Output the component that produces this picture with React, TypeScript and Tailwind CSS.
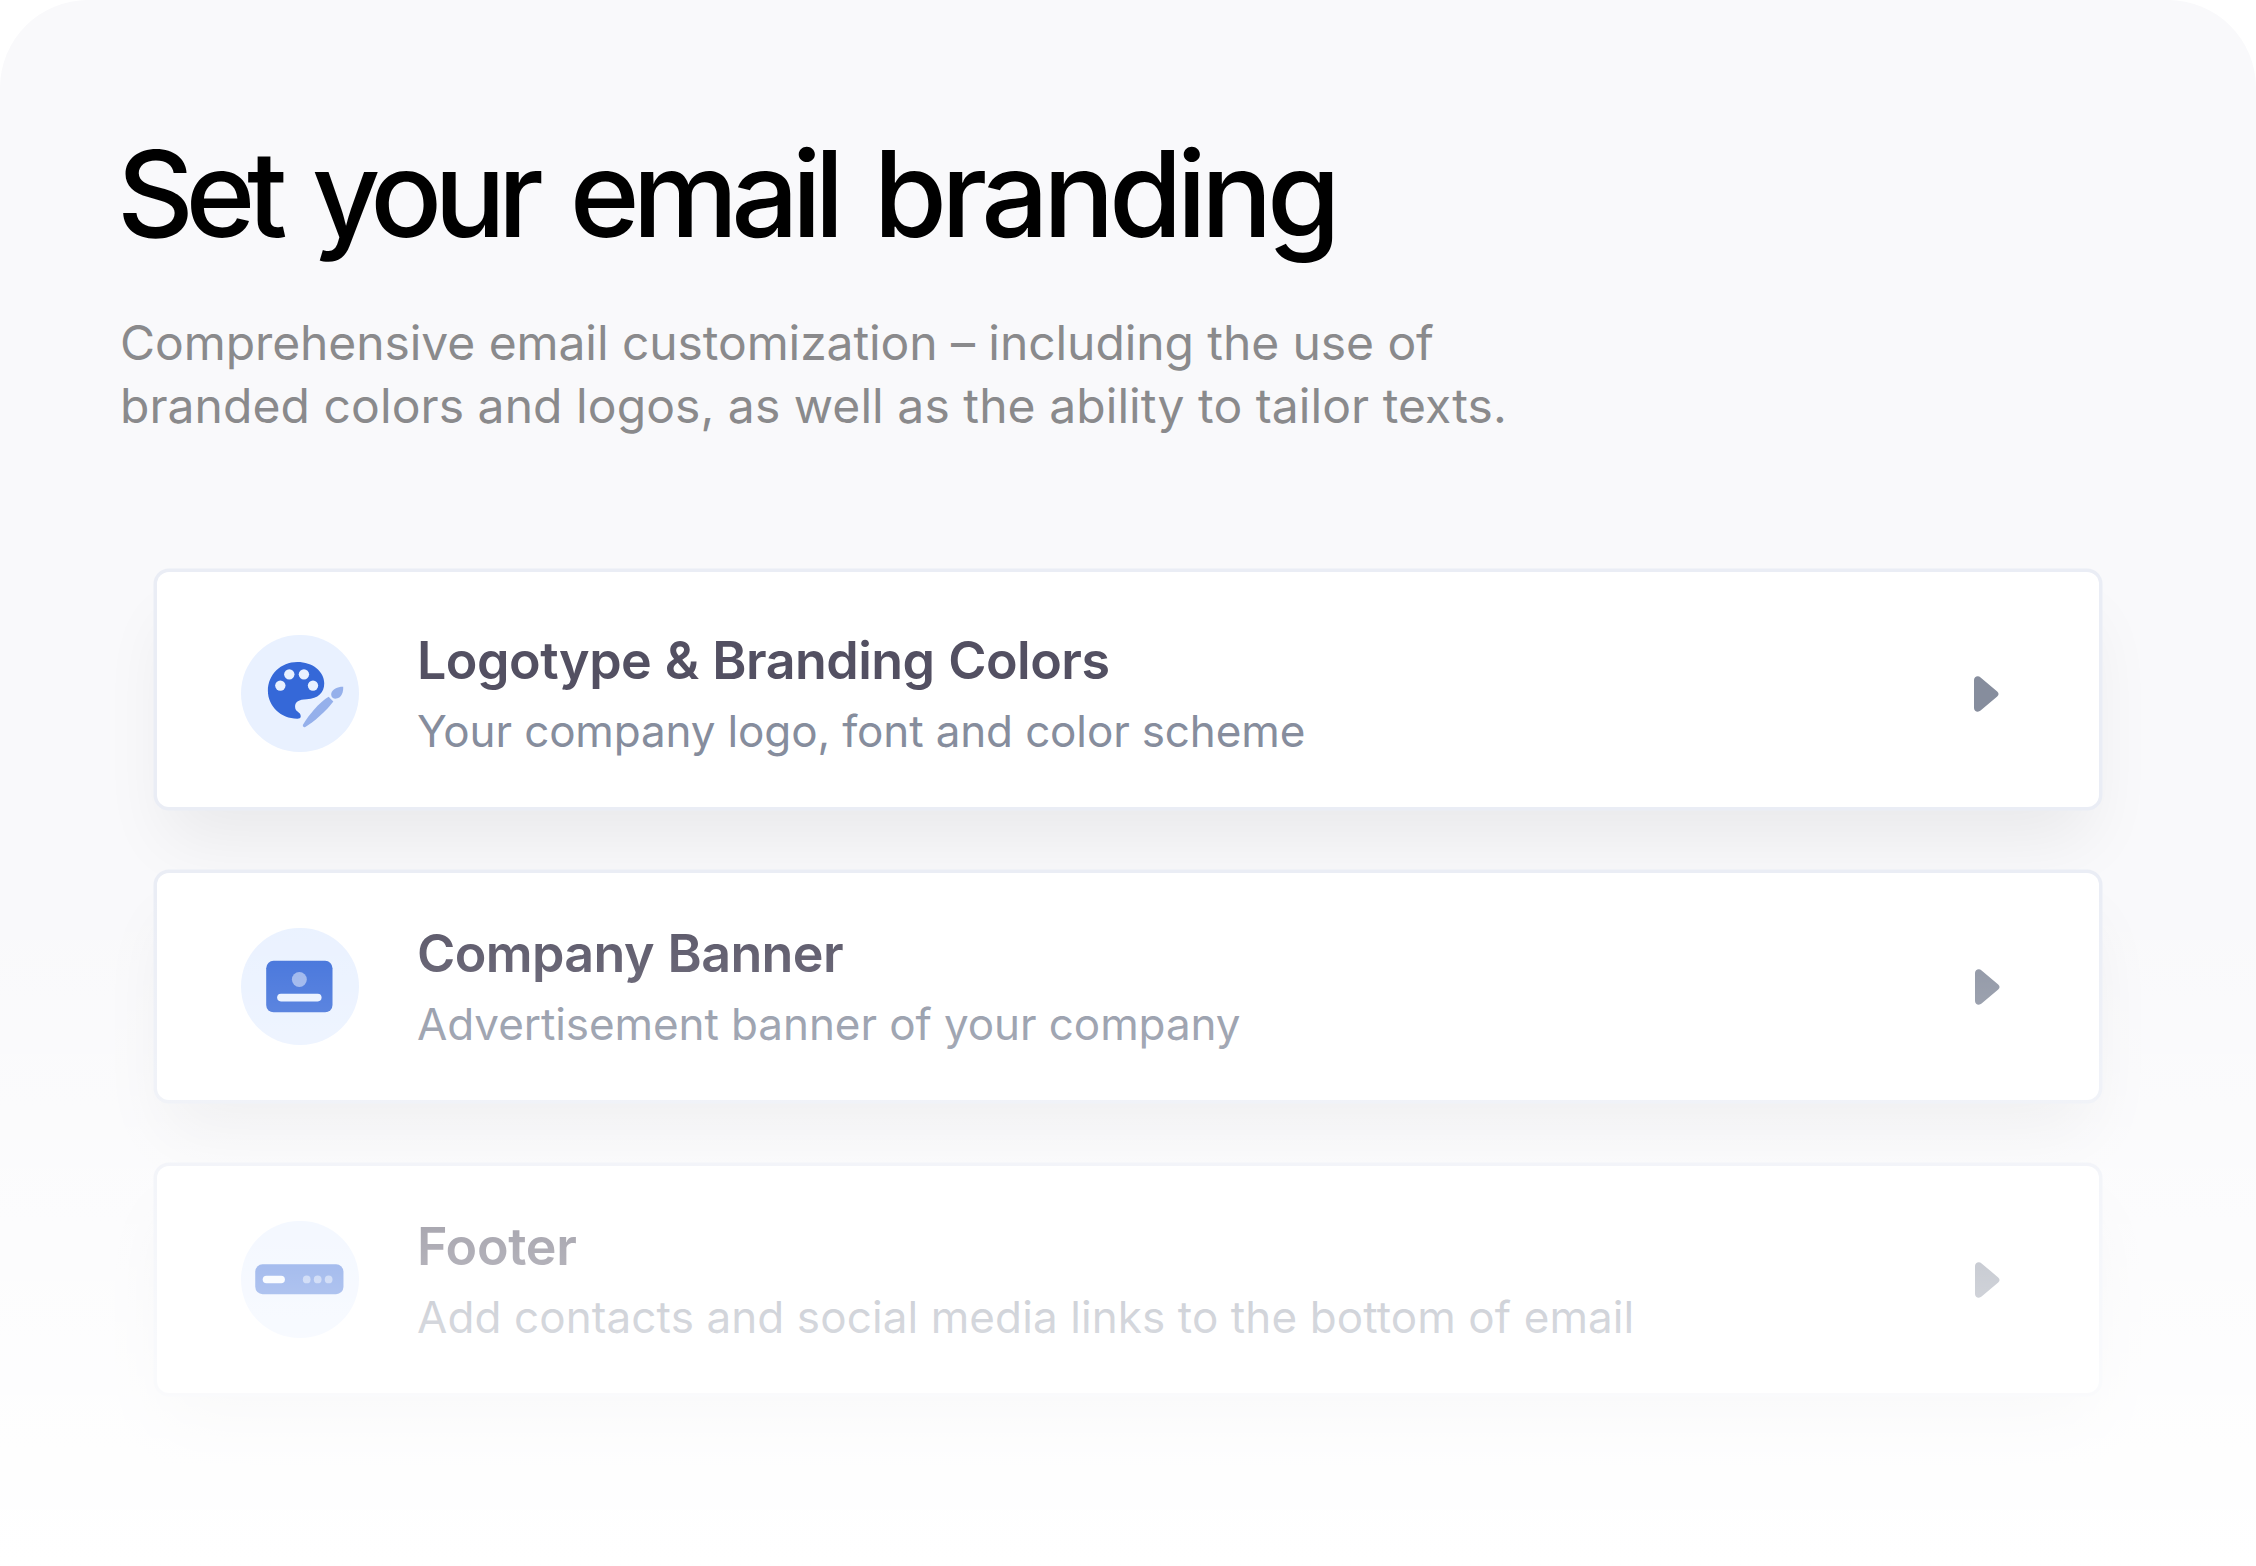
import type { ReactNode } from "react";

function PaletteIcon() {
  return (
    <svg className="size-full" viewBox="241 635 118 118" fill="none">
      <path
        fill="#3568D8"
        d="M297.5 662C313 662 324.600 671.5 324.600 683.5C324.600 693 318.5 699 307 699.4C299 699.5 295.3 702 295.3 707C295.3 712.5 301 712 301 716.5C301 718.3 299.5 719 297.5 719C281 719 268 706.5 268 691C268 674.5 281 662 297.5 662Z"
      />
      <g fill="#E9F1FF">
        <circle cx="280.5" cy="685.8" r="5.2" />
        <circle cx="289.5" cy="674.5" r="5.2" />
        <circle cx="304.2" cy="674.5" r="5.2" />
        <circle cx="313.3" cy="685.8" r="5.2" />
      </g>
      <g fill="#95B0EB">
        <path d="M343.6 687C344 691 342.5 699 335.5 699C333 699 331.3 696.5 331.6 694C332.3 689 339 686.8 343.6 687Z" />
        <path d="M329 697L333.7 701.8C327 711 314 722.5 305.6 727.3C303.8 728.2 302.4 726.8 303.4 725C309 715 320 702.5 329 697Z" />
      </g>
    </svg>
  );
}

function BannerIcon() {
  return (
    <svg className="size-full" viewBox="241 928 118 118" fill="none">
      <rect x="266.3" y="961" width="66.6" height="51.7" rx="7.4" fill="#3568D8" />
      <circle cx="299.6" cy="979.7" r="7.5" fill="#95B0EB" />
      <rect x="277.3" y="994" width="44.6" height="7.7" rx="3.8" fill="#E9F1FF" />
    </svg>
  );
}

function FooterIcon() {
  return (
    <svg className="size-full" viewBox="241 1221.5 118 118" fill="none">
      <rect x="255.3" y="1265" width="88.6" height="30" rx="7.4" fill="#3568D8" />
      <rect x="262.8" y="1276.4" width="22.3" height="7.6" rx="3.8" fill="#F4F8FF" />
      <g fill="#95B0EB">
        <circle cx="307" cy="1280.2" r="3.9" />
        <circle cx="318" cy="1280.2" r="3.9" />
        <circle cx="329" cy="1280.2" r="3.9" />
      </g>
    </svg>
  );
}

function Caret() {
  return (
    <svg className="h-[36px] w-[25px]" viewBox="0 0 25 36">
      <path
        fill="#868D9D"
        d="M0 4C0 .6 4 -.9 6.6 1.4L23.2 15.4C25 17 25 19 23.2 20.6L6.6 34.6C4 36.900 0 35.400 0 32Z"
      />
    </svg>
  );
}

function Row({
  icon,
  title,
  text,
  titleClass,
  textClass,
  first = false,
}: {
  icon: ReactNode;
  title: string;
  text: string;
  titleClass: string;
  textClass: string;
  first?: boolean;
}) {
  return (
    <div
      className={`flex w-full items-center rounded-[12px] bg-white pl-[84px] shadow-[0_0_0_3.5px_#eaedf5,0_42px_68px_-10px_rgba(0,0,0,0.066)] ${
        first ? "h-[235px] pt-[8px] pr-[100px]" : "h-[227px] pr-[99px]"
      }`}
    >
      <div className="flex size-[117.5px] shrink-0 rounded-full bg-[#E9F1FF]">{icon}</div>
      <div className="ml-[58.5px] flex-1 pt-[5px] whitespace-nowrap">
        <h2 className={`text-[52px] leading-[70px] font-semibold text-[#535062] ${titleClass}`}>
          {title}
        </h2>
        <p className={`text-[44px] leading-[70px] text-[#868D9D] ${textClass}`}>{text}</p>
      </div>
      <Caret />
    </div>
  );
}

export default function App() {
  return (
    <main className="relative h-[1566px] w-[2256px] overflow-hidden rounded-t-[88px] bg-[#F9F9FB] font-['Inter',sans-serif]">
      <header className="h-[572px] pt-[119px] pl-[120px] whitespace-nowrap">
        <h1 className="-ml-[3px] w-fit text-[119px] leading-[150px] font-[470] tracking-[-5.7px] text-black">
          <span className="tracking-[-8.4px]">Set</span>{" "}
          <span className="ml-[7px] tracking-[-8px]">your</span>{" "}
          <span className="ml-[8px] tracking-[-7.1px]">email</span>{" "}
          <span className="ml-[10px]">branding</span>
        </h1>
        <p className="mt-[42px] w-fit text-[48px] leading-[63px] text-[#8A8A8C]">
          <span className="tracking-[-0.08px]">
            Comprehensive email customization – including the use of
          </span>
          <br />
          <span className="tracking-[0.07px]">
            branded colors and logos, as well as the ability to tailor texts.
          </span>
        </p>
      </header>
      <section className="flex flex-col gap-[66px] pr-[157px] pl-[157px]">
        <Row
          first
          icon={<PaletteIcon />}
          title="Logotype & Branding Colors"
          titleClass="tracking-[-0.53px] [word-spacing:1px]"
          text="Your company logo, font and color scheme"
          textClass="tracking-[-0.14px]"
        />
        <Row
          icon={<BannerIcon />}
          title="Company Banner"
          titleClass="tracking-[-0.6px] [word-spacing:1px]"
          text="Advertisement banner of your company"
          textClass="tracking-[-0.08px]"
        />
        <Row
          icon={<FooterIcon />}
          title="Footer"
          titleClass="tracking-[-0.3px]"
          text="Add contacts and social media links to the bottom of email"
          textClass="tracking-[0.1px]"
        />
      </section>
      <div className="pointer-events-none absolute inset-x-0 top-[883px] bottom-0 bg-linear-to-b from-white/0 to-white" />
    </main>
  );
}
